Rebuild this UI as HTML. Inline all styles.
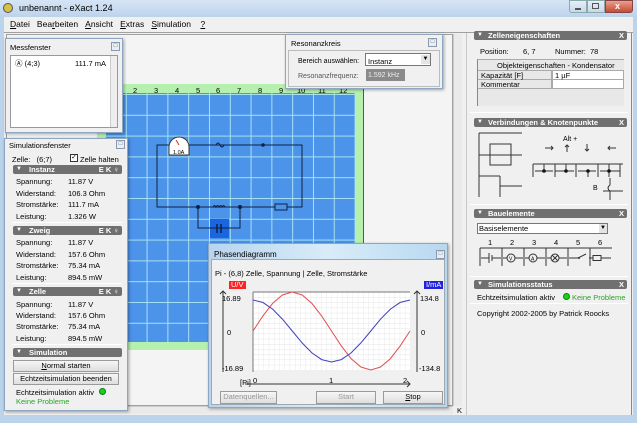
<!DOCTYPE html>
<html><head><meta charset="utf-8"><style>
*{box-sizing:border-box;margin:0;padding:0}
body{width:637px;height:423px;overflow:hidden;background:#bcd3ec;font-family:"Liberation Sans",sans-serif;font-size:7.5px;color:#000;position:relative}
.a{position:absolute}
.t{position:absolute;white-space:nowrap;line-height:9px}
.win{position:absolute;background:#f0f0f0;border:1px solid #8ea6c2;box-shadow:1px 1px 3px rgba(0,0,0,.35)}
.cls{position:absolute;width:9px;height:9px;border:1px solid #8a99ab;background:#e8eef5;font-size:6px;line-height:7px;text-align:center;color:#666}
.hdr{position:absolute;height:9px;background:#707070;border-radius:2px;color:#fff;font-weight:bold;font-size:7.5px;line-height:9px;overflow:hidden}
.hdr b{position:absolute;left:3px;font-size:6px}
.btn{position:absolute;border:1px solid #9a9a9a;background:linear-gradient(#f6f6f6,#dedede);text-align:center;line-height:10px;font-size:7.5px}
.sep{position:absolute;height:1px;background:#b8b8b8;border-bottom:1px solid #fff}
</style></head><body>
<div class="a" style="left:0;top:0;width:637px;height:17px;background:linear-gradient(#d6e5f5,#bcd3ec)"></div>
<div class="a" style="left:3px;top:3px;width:10px;height:10px;border-radius:50%;background:#d8c040;border:1px solid #555"></div>
<div class="t" style="left:19px;top:4px;font-size:9px">unbenannt - eXact 1.24</div>
<div class="a" style="left:569px;top:0;width:18px;height:13px;border:1px solid #8aa;border-radius:0 0 0 3px;background:linear-gradient(#e6eef8,#c8d8ea)"></div>
<div class="a" style="left:575px;top:8px;width:6px;height:2px;background:#555"></div>
<div class="a" style="left:587px;top:0;width:18px;height:13px;border:1px solid #8aa;background:linear-gradient(#e6eef8,#c8d8ea)"></div>
<div class="a" style="left:592px;top:3px;width:7px;height:6px;border:1px solid #555"></div>
<div class="a" style="left:605px;top:0;width:28px;height:13px;border:1px solid #844;border-radius:0 0 3px 0;background:linear-gradient(#e8a090,#c84a30)"></div>
<div class="t" style="left:615px;top:2px;color:#fff;font-weight:bold;font-size:9px">x</div>
<div class="a" style="left:4px;top:17px;width:629px;height:15px;background:#f0f0f0"></div>
<div class="t" style="left:10px;top:20px;font-size:8.5px"><u>D</u>atei&nbsp;&nbsp;&nbsp;Bea<u>r</u>beiten&nbsp;&nbsp;&nbsp;<u>A</u>nsicht&nbsp;&nbsp;&nbsp;<u>E</u>xtras&nbsp;&nbsp;&nbsp;<u>S</u>imulation&nbsp;&nbsp;&nbsp;&nbsp;<u>?</u></div>
<div class="a" style="left:4px;top:32px;width:629px;height:383px;background:#f0f0f0;border-top:1px solid #a0a0a0"></div>
<div class="a" style="left:6px;top:34px;width:447px;height:372px;background:#f4f4f4;border:1px solid #a0a0a0"></div>
<div class="a" style="left:97px;top:84px;width:267px;height:266px;background:#b6f0ae;border-right:1px solid #556"></div>
<div class="a" style="left:105px;top:93px;width:250px;height:249px;background:#4c93ea;background-image:linear-gradient(90deg,#a6e2f2 1px,transparent 1px),linear-gradient(#a6e2f2 1px,transparent 1px);background-size:20.8px 20.8px;background-position:0 1px"></div>
<div class="t" style="left:133px;top:86px">2</div>
<div class="t" style="left:154px;top:86px">3</div><div class="t" style="left:175px;top:86px">4</div><div class="t" style="left:196px;top:86px">5</div><div class="t" style="left:216px;top:86px">6</div><div class="t" style="left:237px;top:86px">7</div><div class="t" style="left:258px;top:86px">8</div><div class="t" style="left:279px;top:86px">9</div><div class="t" style="left:297px;top:86px">10</div><div class="t" style="left:318px;top:86px">11</div><div class="t" style="left:339px;top:86px">12</div>
<svg class="a" style="left:0;top:0" width="637" height="423">
<rect x="210" y="219" width="19" height="19" fill="#1a66e0"/>
<g stroke="#102040" stroke-width="1" fill="none">
<path d="M157 145H302V207H157Z"/>
<path d="M198 207V228H240V207"/>
<path d="M216 145q2-4 4 0q2 4 4 0"/>
<path d="M213 207q1.5-3 3 0q1.5-3 3 0q1.5-3 3 0q1.5-3 3 0"/>
</g>
<rect x="275" y="204" width="12" height="6" fill="#4c93ea" stroke="#102040"/>
<rect x="213" y="222" width="12" height="12" fill="#1a66e0"/>
<line x1="213" y1="228" x2="225" y2="228" stroke="#102040"/>
<line x1="217" y1="224" x2="217" y2="233" stroke="#102040" stroke-width="1.5"/><line x1="221" y1="224" x2="221" y2="233" stroke="#102040" stroke-width="1.5"/>
<circle cx="263" cy="145" r="1.8" fill="#102040"/><circle cx="198" cy="207" r="2" fill="#102040"/><circle cx="240" cy="207" r="2" fill="#102040"/>
<path d="M169 147a10 10 0 0 1 20 0V155H169Z" fill="#fff" stroke="#333"/>
<line x1="179" y1="145" x2="176" y2="140" stroke="#c33"/>
<text x="173" y="154" font-size="5.5" font-family="Liberation Sans">1.0A</text>
</svg>
<div class="a" style="left:453px;top:34px;width:9px;height:372px;background:#eaeaea;border-left:1px solid #ccc"></div>
<div class="a" style="left:6px;top:406px;width:447px;height:8px;background:#eaeaea;border-top:1px solid #ccc"></div>
<div class="t" style="left:457px;top:406px">K</div>
<div class="win" style="left:5px;top:38px;width:118px;height:95px"></div>
<div class="t" style="left:10px;top:43px">Messfenster</div>
<div class="cls" style="left:111px;top:42px">□</div>
<div class="a" style="left:10px;top:55px;width:108px;height:73px;background:#fff;border:1px solid #999"></div>
<div class="a" style="left:110px;top:56px;width:7px;height:71px;background:#eee;border-left:1px solid #ccc"></div>
<div class="t" style="left:15px;top:59px">Ⓐ (4;3)</div>
<div class="t" style="left:75px;top:59px">111.7 mA</div>
<div class="win" style="left:4px;top:138px;width:124px;height:273px"></div>
<div class="t" style="left:9px;top:141px">Simulationsfenster</div>
<div class="cls" style="left:116px;top:140px">□</div>
<div class="t" style="left:12px;top:155px">Zelle:&nbsp;&nbsp;&nbsp;(6;7)</div>
<div class="a" style="left:70px;top:154px;width:8px;height:8px;border:1px solid #333;background:#fff;font-size:7px;line-height:6px;text-align:center">✓</div>
<div class="t" style="left:80px;top:155px">Zelle halten</div>
<div class="hdr" style="left:13px;top:165px;width:109px"><b>▼</b><span style="position:absolute;left:16px">Instanz</span><span style="position:absolute;right:3px">E K ♀</span></div>
<div class="t" style="left:16px;top:176px;line-height:11.6px">Spannung:<br>Widerstand:<br>Stromstärke:<br>Leistung:</div>
<div class="t" style="left:68px;top:176px;line-height:11.6px">11.87 V<br>106.3 Ohm<br>111.7 mA<br>1.326 W</div>
<div class="sep" style="left:12px;top:222px;width:110px"></div>
<div class="hdr" style="left:13px;top:226px;width:109px"><b>▼</b><span style="position:absolute;left:16px">Zweig</span><span style="position:absolute;right:3px">E K ♀</span></div>
<div class="t" style="left:16px;top:237px;line-height:11.5px">Spannung:<br>Widerstand:<br>Stromstärke:<br>Leistung:</div>
<div class="t" style="left:68px;top:237px;line-height:11.5px">11.87 V<br>157.6 Ohm<br>75.34 mA<br>894.5 mW</div>
<div class="sep" style="left:12px;top:283px;width:110px"></div>
<div class="hdr" style="left:13px;top:287px;width:109px"><b>▼</b><span style="position:absolute;left:16px">Zelle</span><span style="position:absolute;right:3px">E K ♀</span></div>
<div class="t" style="left:16px;top:299px;line-height:11.2px">Spannung:<br>Widerstand:<br>Stromstärke:<br>Leistung:</div>
<div class="t" style="left:68px;top:299px;line-height:11.2px">11.87 V<br>157.6 Ohm<br>75.34 mA<br>894.5 mW</div>
<div class="sep" style="left:12px;top:344px;width:110px"></div>
<div class="hdr" style="left:13px;top:348px;width:109px"><b>▼</b><span style="position:absolute;left:16px">Simulation</span></div>
<div class="btn" style="left:13px;top:360px;width:106px;height:12px"><u>N</u>ormal starten</div>
<div class="btn" style="left:13px;top:373px;width:106px;height:12px">Echtzeitsimulation beenden</div>
<div class="t" style="left:16px;top:388px">Echtzeitsimulation aktiv</div>
<div class="a" style="left:99px;top:388px;width:7px;height:7px;border-radius:50%;background:#2c2;border:1px solid #080"></div>
<div class="t" style="left:16px;top:397px;color:#2a2">Keine Probleme</div>
<div class="win" style="left:285px;top:34px;width:158px;height:55px"></div>
<div class="t" style="left:291px;top:39px">Resonanzkreis</div>
<div class="cls" style="left:428px;top:38px">□</div>
<div class="a" style="left:288px;top:50px;width:152px;height:37px;border:1px solid #bbb"></div>
<div class="t" style="left:298px;top:57px;font-size:7px">Bereich auswählen:</div>
<div class="a" style="left:365px;top:53px;width:66px;height:13px;background:#fff;border:1px solid #777"></div>
<div class="t" style="left:368px;top:57px">Instanz</div>
<div class="a" style="left:421px;top:55px;width:9px;height:9px;background:#e4e4e4;font-size:6px;text-align:center;line-height:9px">▼</div>
<div class="t" style="left:298px;top:72px;color:#555;font-size:7px">Resonanzfrequenz:</div>
<div class="a" style="left:366px;top:69px;width:39px;height:12px;background:#8a8a8a"></div>
<div class="t" style="left:368px;top:71px;color:#eee;font-size:7px">1.592 kHz</div>
<div class="win" style="left:208px;top:243px;width:240px;height:165px;background:linear-gradient(90deg,#b8d4ee,#d8ecf8 50%,#b8d8f0)"></div>
<div class="a" style="left:211px;top:259px;width:234px;height:146px;background:#f0f0f0;border:1px solid #a0a8b0"></div>
<div class="t" style="left:214px;top:250px;font-size:8px">Phasendiagramm</div>
<div class="cls" style="left:436px;top:250px">□</div>
<div class="t" style="left:215px;top:269px">Pi - (6,8) Zelle, Spannung | Zelle, Stromstärke</div>
<div class="t" style="left:229px;top:281px;background:#f22;color:#fff;padding:0 2px;line-height:8px">U/V</div>
<div class="t" style="left:424px;top:281px;background:#22d;color:#fff;padding:0 2px;line-height:8px">I/mA</div>
<svg class="a" style="left:0;top:0" width="637" height="423">
<defs><pattern id="g" width="5.24" height="5.2" patternUnits="userSpaceOnUse" x="253" y="292"><path d="M0 0H5.24M0 0V5.2" stroke="#dcdcdc" stroke-width=".6"/></pattern></defs>
<rect x="253" y="292" width="157" height="78" fill="#fff"/>
<rect x="253" y="292" width="157" height="78" fill="url(#g)"/>
<line x1="253" y1="292" x2="410" y2="292" stroke="#777"/>
<line x1="253" y1="292" x2="253" y2="372" stroke="#777"/>
<g stroke="#333" fill="none">
<path d="M223 372V291M220 294l3-3 3 3"/>
<path d="M417 372V291M414 294l3-3 3 3"/>
<path d="M245 384H410M407 381l3 3-3 3"/>
</g>
<polyline fill="none" stroke="#e05050" stroke-width="1" points="253,331 262.8,316.1 272.6,303.4 282.4,295 292.3,292 302.1,295 311.9,303.4 321.7,316.1 331.5,331 341.3,345.9 351.1,358.6 360.9,367 370.8,370 380.6,367 390.4,358.6 400.2,345.9 410,331"/>
<polyline fill="none" stroke="#4040c0" stroke-width="1" points="253,300 262.8,302.4 272.6,309.1 282.4,319.1 292.3,331 302.1,342.9 311.9,352.9 321.7,359.6 331.5,362 341.3,359.6 351.1,352.9 360.9,342.9 370.8,331 380.6,319.1 390.4,309.1 400.2,302.4 410,300"/>
</svg>
<div class="t" style="left:222px;top:294px">16.89</div>
<div class="t" style="left:227px;top:328px">0</div>
<div class="t" style="left:222px;top:364px">-16.89</div>
<div class="t" style="left:420px;top:294px">134.8</div>
<div class="t" style="left:421px;top:328px">0</div>
<div class="t" style="left:419px;top:364px">-134.8</div>
<div class="t" style="left:240px;top:378px">[Pi]</div>
<div class="t" style="left:253px;top:376px">0</div>
<div class="t" style="left:329px;top:376px">1</div>
<div class="t" style="left:403px;top:376px">2</div>
<div class="btn" style="left:220px;top:391px;width:57px;height:13px;color:#999">Datenquellen...</div>
<div class="btn" style="left:316px;top:391px;width:60px;height:13px;color:#999">Start</div>
<div class="btn" style="left:383px;top:391px;width:60px;height:13px"><u>S</u>top</div>
<div class="a" style="left:466px;top:33px;width:166px;height:382px;background:#f0f0f0;border-left:1px solid #c8c8c8;border-right:1px solid #7a8a9a"></div>
<div class="hdr" style="left:474px;top:31px;width:153px"><b>▼</b><span style="position:absolute;left:14px">Zelleneigenschaften</span><span style="position:absolute;right:3px">X</span></div>
<div class="t" style="left:480px;top:47px">Position:</div><div class="t" style="left:523px;top:47px">6, 7</div><div class="t" style="left:555px;top:47px">Nummer:</div><div class="t" style="left:590px;top:47px">78</div>
<div class="a" style="left:477px;top:59px;width:147px;height:47px;background:#e8e8e8;border-left:1px solid #888;border-top:1px solid #aaa"></div>
<div class="t" style="left:497px;top:61px">Objekteigenschaften - Kondensator</div>
<div class="a" style="left:478px;top:70px;width:74px;height:19px;border:1px solid #aaa;border-left:0"></div>
<div class="a" style="left:552px;top:70px;width:72px;height:19px;background:#fff;border:1px solid #aaa"></div>
<div class="a" style="left:478px;top:79px;width:146px;height:1px;background:#aaa"></div>
<div class="t" style="left:481px;top:71px">Kapazität [F]</div><div class="t" style="left:555px;top:71px">1 µF</div>
<div class="t" style="left:481px;top:80px">Kommentar</div>
<div class="sep" style="left:470px;top:112px;width:158px"></div>
<div class="hdr" style="left:474px;top:118px;width:153px"><b>▼</b><span style="position:absolute;left:14px">Verbindungen &amp; Knotenpunkte</span><span style="position:absolute;right:3px">X</span></div>
<svg class="a" style="left:0;top:0" width="637" height="423">
<g stroke="#333" fill="none" stroke-width="1">
<path d="M479 133H522M479 133V197M479 176H500M500 176V197M500 186H522"/>
<path d="M479 155H522M490 144H511V165H490Z"/>
<path d="M533 164H623M533 164V177M555 164V177M576 164V177M598 164V177M620 164V177"/>
<path d="M535 171H553M555 171H574M578 171H596M600 171H620M544 164V171M566 164V171M588 171V177M609 164V177"/>
<path d="M610 178V185q-4 3 0 6V200M603 191H623"/>
<path d="M545 148H553M551 146l2 2-2 2M567 152V145M565 147l2-2 2 2M587 144V151M585 149l2 2 2-2M616 148H608M610 146l-2 2 2 2"/>
</g>
<g fill="#111"><circle cx="544" cy="171" r="1.8"/><circle cx="566" cy="171" r="1.8"/><circle cx="588" cy="171" r="1.8"/><circle cx="609" cy="171" r="1.8"/></g>
</svg>
<div class="t" style="left:563px;top:135px;font-size:7px">Alt +</div>
<div class="t" style="left:593px;top:184px;font-size:7px">B</div>
<div class="sep" style="left:470px;top:204px;width:158px"></div>
<div class="hdr" style="left:474px;top:209px;width:153px"><b>▼</b><span style="position:absolute;left:14px">Bauelemente</span><span style="position:absolute;right:3px">X</span></div>
<div class="a" style="left:477px;top:223px;width:131px;height:11px;background:#fff;border:1px solid #777"></div>
<div class="t" style="left:479px;top:224px">Basiselemente</div>
<div class="a" style="left:599px;top:224px;width:8px;height:9px;background:#e4e4e4;font-size:6px;text-align:center;line-height:9px">▼</div>
<div class="t" style="left:488px;top:238px">1</div><div class="t" style="left:510px;top:238px">2</div><div class="t" style="left:532px;top:238px">3</div><div class="t" style="left:554px;top:238px">4</div><div class="t" style="left:576px;top:238px">5</div><div class="t" style="left:598px;top:238px">6</div>
<svg class="a" style="left:0;top:0" width="637" height="423">
<g stroke="#333" fill="none">
<path d="M480 248H612M480 248V266M502 248V266M524 248V266M546 248V266M568 248V266M590 248V266"/>
<path d="M481 258H489M492 258H501M489 253V263M492 255V261" />
<path d="M503 258H507M515 258H523M525 258H529M537 258H545M547 258H551M559 258H567M569 258H578L586 254M589 258H593M601 258H611"/>
<circle cx="511" cy="258" r="4"/><circle cx="533" cy="258" r="4"/><circle cx="555" cy="258" r="4"/>
<path d="M552 255l6 6M558 255l-6 6"/>
<rect x="593" y="255.5" width="8" height="5"/>
</g>
<text x="509" y="260.5" font-size="5" font-family="Liberation Sans">V</text>
<text x="531" y="260.5" font-size="5" font-family="Liberation Sans">A</text>
<circle cx="579" cy="258" r="1" fill="#333"/>
</svg>
<div class="sep" style="left:470px;top:276px;width:158px"></div>
<div class="hdr" style="left:474px;top:280px;width:153px"><b>▼</b><span style="position:absolute;left:14px">Simulationsstatus</span><span style="position:absolute;right:3px">X</span></div>
<div class="t" style="left:477px;top:293px">Echtzeitsimulation aktiv</div>
<div class="a" style="left:563px;top:293px;width:7px;height:7px;border-radius:50%;background:#2c2;border:1px solid #080"></div>
<div class="t" style="left:572px;top:293px;color:#2a2">Keine Probleme</div>
<div class="sep" style="left:470px;top:303px;width:158px"></div>
<div class="t" style="left:477px;top:309px">Copyright 2002-2005 by Patrick Roocks</div>
</body></html>
